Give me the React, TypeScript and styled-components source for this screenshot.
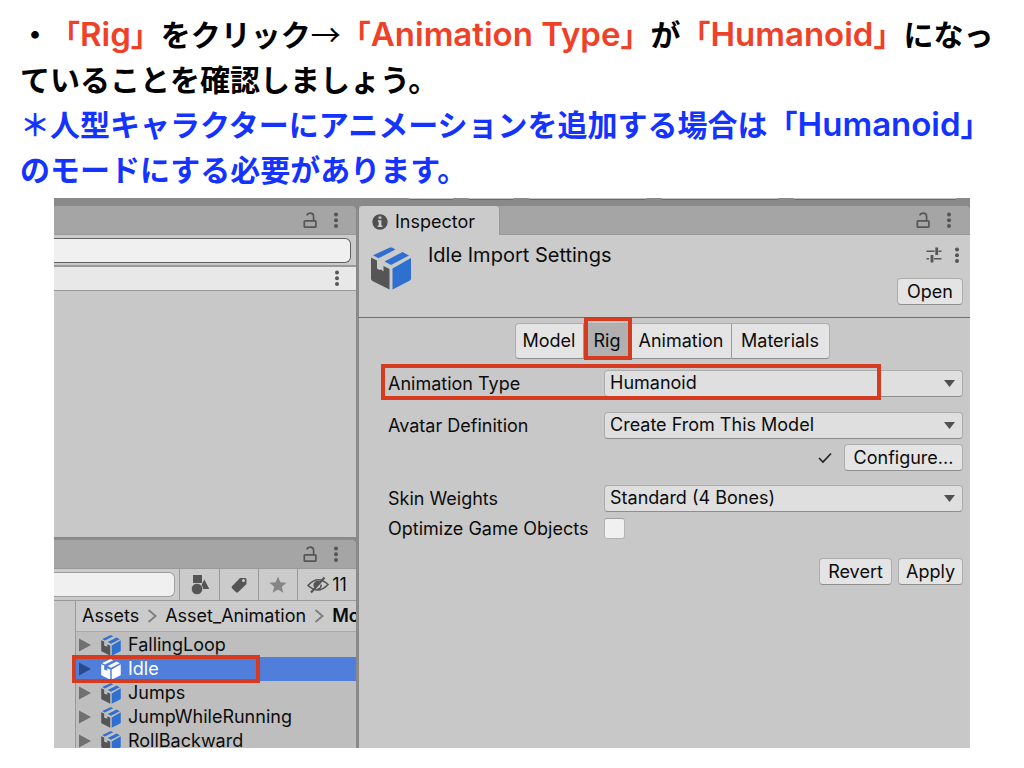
import React from "react";
import styled, { createGlobalStyle, css } from "styled-components";

const GlobalStyle = createGlobalStyle`
  *, *::before, *::after { box-sizing: border-box; }
  body { margin: 0; background: #fff; }
  button, input, select { font: inherit; color: inherit; margin: 0; }
`;

const line = "#999999";
const highlight = "#d63b1f";

const Page = styled.main`
  display: flex;
  flex-direction: column;
  height: 100vh;
  padding: 12px 0 20px;
  font-family: Inter, "Noto Sans CJK JP", sans-serif;
`;

const Notes = styled.div`
  padding: 0 20px;
  margin-bottom: 6px;
  font-family: Inter, "Noto Sans CJK JP", sans-serif;
  font-size: 33px;
  font-weight: 600;
  line-height: 45px;
  white-space: nowrap;
  text-spacing-trim: space-all;
`;

const Note = styled.p<{ $tone?: string }>`
  height: 45px;
  margin: 0;
  color: ${(p) => p.$tone ?? "#000"};
`;

const Key = styled.strong`
  font-weight: inherit;
  color: #ee4128;
`;

const Kana = styled.span<{ $thin?: boolean }>`
  font-family: "Noto Sans CJK JP", sans-serif;
  font-size: 30px;
  font-weight: ${(p) => (p.$thin ? 400 : 700)};
  line-height: 30px;
`;

const Editor = styled.section`
  flex: 1;
  min-height: 0;
  margin: 0 54px;
  display: flex;
  flex-direction: column;
  overflow: hidden;
  background: #8a8a8a;
  color: #0c0c0c;
  font-size: 18px;
  line-height: 24px;
`;

const TopStrip = styled.div`
  display: flex;
  justify-content: flex-end;
  gap: 14px;
  height: 8px;
  padding-right: 13px;
`;

const StripButton = styled.span<{ $w: number }>`
  width: ${(p) => p.$w}px;
  height: 2px;
  background: #c4c4c4;
  border-bottom: 1px solid #6a6a6a;
  border-radius: 0 0 3px 3px;
`;

const Columns = styled.div`
  flex: 1;
  min-height: 0;
  display: grid;
  grid-template-columns: minmax(0, 302fr) minmax(0, 611fr);
  gap: 3px;
`;

const LeftColumn = styled.div`
  display: flex;
  flex-direction: column;
  gap: 3px;
  min-height: 0;
`;

const Panel = styled.section<{ $height?: number }>`
  flex: ${(p) => (p.$height ? `0 0 ${p.$height}px` : "1")};
  min-height: 0;
  display: flex;
  flex-direction: column;
  overflow: hidden;
  background: #c8c8c8;
  border-radius: 0 5px 0 0;
`;

const PanelBar = styled.header<{ $end: number }>`
  flex: none;
  display: flex;
  align-items: center;
  justify-content: flex-end;
  gap: 15px;
  height: 29px;
  padding-right: ${(p) => p.$end}px;
  background: #a5a5a5;
  border-bottom: 1px solid ${line};
`;

const IconButton = styled.button`
  display: flex;
  align-items: center;
  justify-content: center;
  padding: 0;
  border: 0;
  background: none;
  color: #555;
`;

const SearchRow = styled.div`
  flex: none;
  height: 32px;
  padding: 3px 5px 0 0;
  background: #cbcbcb;
  border-bottom: 2px solid ${line};
`;

const SearchInput = styled.input<{ $soft?: boolean }>`
  display: block;
  width: 100%;
  height: 25px;
  padding: 0 8px;
  border: 1px solid ${(p) => (p.$soft ? "#a0a0a0" : "#606060")};
  border-left: 0;
  border-radius: 0 6px 6px 0;
  background: #f0f0f0;
  outline: 0;
`;

const SceneRow = styled.div`
  flex: none;
  display: flex;
  align-items: center;
  justify-content: flex-end;
  height: 24px;
  padding-right: 16px;
  background: #e8e8e8;
  border-bottom: 1px solid ${line};
`;

const ProjectTools = styled.div`
  flex: none;
  display: flex;
  height: 32px;
  background: #cbcbcb;
  border-bottom: 1px solid ${line};
`;

const SearchCell = styled.div`
  flex: 1;
  padding: 3px 4px 0 0;
`;

const Tool = styled(IconButton)<{ $w: number }>`
  flex: none;
  width: ${(p) => p.$w}px;
  gap: 3px;
  border-left: 1px solid ${line};
`;

const Count = styled.span`
  color: #0c0c0c;
`;

const ProjectBody = styled.div`
  flex: 1;
  min-height: 0;
  padding-left: 21px;
`;

const Browser = styled.div`
  height: 100%;
  background: #bebebe;
  border-left: 1px solid ${line};
`;

const Crumbs = styled.nav`
  display: flex;
  align-items: center;
  gap: 8px;
  height: 31px;
  padding-left: 6px;
  margin-bottom: 1px;
  background: #cbcbcb;
  border-bottom: 1px solid #a8a8a8;
  white-space: nowrap;
`;

const Crumb = styled.a<{ $current?: boolean }>`
  color: inherit;
  text-decoration: none;
  font-weight: ${(p) => (p.$current ? 600 : 400)};
`;

const CrumbArrow = styled.svg`
  flex: none;
`;

const AssetList = styled.ul`
  margin: 0;
  padding: 0;
  list-style: none;
`;

const marked = css`
  position: relative;
  &::after {
    content: "";
    position: absolute;
    border: 4px solid ${highlight};
    pointer-events: none;
  }
`;

const Asset = styled.li<{ $selected?: boolean }>`
  display: flex;
  align-items: center;
  height: 24px;
  padding-left: 3px;
  white-space: nowrap;
  ${(p) =>
    p.$selected &&
    css`
      ${marked}
      background: #4f7fdb;
      color: #fff;
      &::after { inset: -2px 96px -2px -4px; }
    `}
`;

const AssetArrow = styled.svg`
  flex: none;
  margin-right: 10px;
`;

const AssetIcon = styled.svg`
  flex: none;
  margin-right: 7px;
`;

const InspectorBar = styled(PanelBar)`
  position: relative;
  border-bottom: 0;
  box-shadow: inset 0 -1px ${line};
`;

const InspectorTab = styled.h2`
  display: flex;
  align-items: center;
  gap: 7px;
  width: 141px;
  height: 100%;
  margin: 0 auto 0 0;
  padding: 3px 0 0 13px;
  background: #cbcbcb;
  border-right: 1px solid ${line};
  border-radius: 4px 4px 0 0;
  font-size: 18px;
  font-weight: 400;
`;

const AssetHeader = styled.div`
  flex: none;
  display: flex;
  height: 83px;
  padding: 8px 7px 0 12px;
  background: #cbcbcb;
  border-bottom: 1px solid #707070;
`;

const AssetTitle = styled.h1`
  flex: 1;
  margin: 0 0 0 17px;
  font-size: 20px;
  font-weight: 400;
`;

const HeaderSide = styled.div`
  display: flex;
  flex-direction: column;
  align-items: flex-end;
  gap: 11px;
`;

const HeaderIcons = styled.div`
  display: flex;
  align-items: center;
  gap: 12px;
  height: 24px;
  padding-right: 3px;
`;

const PushButton = styled.button<{ $w: number }>`
  width: ${(p) => p.$w}px;
  height: 27px;
  padding: 0;
  border: 1px solid #adadad;
  border-bottom-color: #8e8e8e;
  border-radius: 4px;
  background: #e4e4e4;
`;

const Tabs = styled.div`
  display: flex;
  justify-content: center;
  margin: 5px 0 11px;
  padding-left: 15px;
`;

const Tab = styled.button<{ $w: number; $active?: boolean }>`
  width: ${(p) => p.$w}px;
  height: 36px;
  padding: 0;
  border: 1px solid #adadad;
  border-left-color: ${line};
  border-bottom-color: #8e8e8e;
  border-right-width: 0;
  background: ${(p) => (p.$active ? "#b0b0b0" : "#e4e4e4")};
  &:first-child { border-radius: 4px 0 0 4px; border-left-color: #adadad; }
  &:last-child { border-radius: 0 4px 4px 0; border-right-width: 1px; }
  ${(p) =>
    p.$active &&
    css`
      ${marked}
      &::after { inset: -7px -1px -2px 0; }
    `}
`;

const Form = styled.form`
  padding: 0 7px 0 29px;
`;

const Field = styled.div<{ $gap: number; $marked?: boolean }>`
  display: grid;
  grid-template-columns: 216px minmax(0, 1fr);
  align-items: center;
  min-height: 27px;
  margin-bottom: ${(p) => p.$gap}px;
  ${(p) =>
    p.$marked &&
    css`
      ${marked}
      &::after { inset: -6px 82px -3px -7px; }
    `}
`;

const SelectBox = styled.div`
  display: grid;
  align-items: center;
  & > * { grid-area: 1 / 1; }
`;

const Select = styled.select`
  appearance: none;
  width: 100%;
  height: 27px;
  padding: 0 28px 2px 5px;
  border: 1px solid #adadad;
  border-bottom-color: #8e8e8e;
  border-radius: 4px;
  background: #dfdfdf;
`;

const SelectArrow = styled.svg`
  justify-self: end;
  margin-right: 8px;
  pointer-events: none;
`;

const Check = styled.input`
  appearance: none;
  width: 21px;
  height: 21px;
  border: 1px solid #b4b4b4;
  border-top-color: #a0a0a0;
  border-radius: 3px;
  background: #f0f0f0;
`;

const Actions = styled.div<{ $gap: number; $after: number }>`
  display: flex;
  align-items: center;
  justify-content: flex-end;
  gap: ${(p) => p.$gap}px;
  margin-bottom: ${(p) => p.$after}px;
`;

const Lock = () => (
  <svg width="15" height="17" viewBox="0 0 15 17" fill="none" stroke="currentColor" strokeWidth="1.7">
    <rect x="1.3" y="8.8" width="11.6" height="6.4" rx="0.8" />
    <path d="M3.6 3.4C4.3 1.9 5.6 1.2 7 1.2c2.200 0 3.600 1.500 3.600 3.600v4" />
  </svg>
);

const Kebab = () => (
  <svg width="6" height="17" viewBox="0 0 6 17" fill="currentColor">
    <circle cx="3" cy="2.500" r="2" />
    <circle cx="3" cy="8.300" r="2" />
    <circle cx="3" cy="14.100" r="2" />
  </svg>
);

const BoxShapes = ({ white }: { white?: boolean }) => (
  <>
    <path fill={white ? "#fff" : "#555"} d="M0 10.500L6 13.500v8l2.500 1.500 1.500-.500 2.500 2v-5.500L18.500 22V42.500L1.500 34Q0 33 0 31.500Z" />
    <path fill={white ? "#fff" : "#2f6fd0"} d="M21.500 21.500L40 11v20.500q0 1.500-1.500 2.300L21.500 42.500Z" />
    <path fill={white ? "#fff" : "#2f6fd0"} d="M2 8.300L19 .600q1-.400 2 0L24.500 2.600 7.500 11.300Z" />
    <path fill={white ? "#fff" : "#2f6fd0"} d="M13.500 14.500L31.500 5l6.500 3.500-18 9.500Z" />
  </>
);

const Sliders = () => (
  <svg width="16" height="16" viewBox="0 0 16 16" fill="none" stroke="currentColor" strokeWidth="1.500">
    <path d="M0.500 4.200h8M12.500 4.200h3M.500 11.800h2.500M8 11.800h7.500" />
    <path strokeWidth="2.800" d="M10.700.500v7.500M6 8v7.500" />
  </svg>
);

const Shapes = () => (
  <svg width="20" height="20" viewBox="0 0 20 20" fill="currentColor">
    <path d="M3 0h9v8H3zM14.300 4.500l5 9.500h-7L11 11z" />
    <circle cx="7" cy="14" r="5.700" stroke="#cbcbcb" strokeWidth="0.800" />
  </svg>
);

const Tag = () => (
  <svg width="16" height="16" viewBox="0 0 16 16">
    <path fill="currentColor" fillRule="evenodd" d="M9 1h5q1.500 0 1.500 1.500V7L7 15.200q-1 .800-2 0L1 11.200q-.900-1 0-2ZM11 3.500a1.500 1.500 0 1 0 3 0a1.500 1.500 0 1 0-3 0Z" />
  </svg>
);

const Star = () => (
  <svg width="18" height="18" viewBox="0 0 18 18">
    <path fill="#868686" d="M9 .500l2.400 5.700 6.100.500-4.700 4 1.500 6.100L9 13.500l-5.300 3.300 1.500-6.100-4.700-4 6.100-.500z" />
  </svg>
);

const HiddenEye = () => (
  <svg width="22" height="18" viewBox="0 0 22 18" fill="none" stroke="currentColor" strokeWidth="1.600">
    <path d="M1 9.500Q10.500-1.500 21 8.500Q11.500 19 1 9.500Z" />
    <path fill="currentColor" d="M7.500 10.500a3.500 3.500 0 0 1 5.500-4z" />
    <path d="M14 8.500a3.500 3.500 0 0 1-3.500 4.500" />
    <path strokeWidth="2.200" d="M4 16.500L17.500 1.500" />
  </svg>
);

const Chevron = () => (
  <CrumbArrow width="10" height="14" viewBox="0 0 10 14" fill="none" stroke="#808080" strokeWidth="2">
    <path d="M1.500 1L8.500 7l-7 6" />
  </CrumbArrow>
);

const PanelControls = () => (
  <>
    <IconButton aria-label="Lock"><Lock /></IconButton>
    <IconButton aria-label="Panel menu"><Kebab /></IconButton>
  </>
);

const assets = ["FallingLoop", "Idle", "Jumps", "JumpWhileRunning", "RollBackward"];

const Dropdown = ({ id, label, value, gap, mark }: { id: string; label: string; value: string; gap: number; mark?: boolean }) => (
  <Field $gap={gap} $marked={mark}>
    <label htmlFor={id}>{label}</label>
    <SelectBox>
      <Select id={id} defaultValue={value}>
        <option>{value}</option>
      </Select>
      <SelectArrow width="11" height="7" viewBox="0 0 11 7"><path fill="#505050" d="M0 0h11L5.500 7z" /></SelectArrow>
    </SelectBox>
  </Field>
);

export default function App() {
  return (
    <Page>
      <GlobalStyle />
      <Notes lang="ja">
        <Note>
          <Kana>・</Kana><Key><Kana>「</Kana>Rig<Kana>」</Kana></Key><Kana>をクリック</Kana><Kana $thin>→</Kana>
          <Key><Kana>「</Kana>Animation Type<Kana>」</Kana></Key><Kana>が</Kana>
          <Key><Kana>「</Kana>Humanoid<Kana>」</Kana></Key><Kana>になっ</Kana>
        </Note>
        <Note><Kana>ていることを確認しましょう。</Kana></Note>
        <Note $tone="#1433ff">
          <Kana>＊人型キャラクターにアニメーションを追加する場合は「</Kana>Humanoid<Kana>」</Kana>
        </Note>
        <Note $tone="#1433ff"><Kana>のモードにする必要があります。</Kana></Note>
      </Notes>

      <Editor>
        <TopStrip>
          {[46, 46, 119, 118, 164].map((w, i) => <StripButton key={i} $w={w} />)}
        </TopStrip>
        <Columns>
          <LeftColumn>
            <Panel>
              <PanelBar $end={17}><PanelControls /></PanelBar>
              <SearchRow><SearchInput aria-label="Search hierarchy" /></SearchRow>
              <SceneRow><IconButton aria-label="Scene menu"><Kebab /></IconButton></SceneRow>
            </Panel>
            <Panel $height={208}>
              <PanelBar $end={17}><PanelControls /></PanelBar>
              <ProjectTools>
                <SearchCell><SearchInput $soft aria-label="Search project" /></SearchCell>
                <Tool $w={40} aria-label="Search by type"><Shapes /></Tool>
                <Tool $w={39} aria-label="Search by label"><Tag /></Tool>
                <Tool $w={39} aria-label="Favorites"><Star /></Tool>
                <Tool $w={59} aria-label="Hidden packages"><HiddenEye /><Count>11</Count></Tool>
              </ProjectTools>
              <ProjectBody>
                <Browser>
                  <Crumbs aria-label="Folder path">
                    <Crumb href="#assets">Assets</Crumb><Chevron />
                    <Crumb href="#animation">Asset_Animation</Crumb><Chevron />
                    <Crumb href="#motion" $current>Mo</Crumb>
                  </Crumbs>
                  <AssetList>
                    {assets.map((name) => {
                      const selected = name === "Idle";
                      return (
                        <Asset key={name} $selected={selected}>
                          <AssetArrow width="12" height="14" viewBox="0 0 12 14">
                            <path fill={selected ? "#294a8c" : "#707070"} d="M0 0.500v13L12 7z" />
                          </AssetArrow>
                          <AssetIcon width="20" height="21" viewBox="0 0 40 43"><BoxShapes white={selected} /></AssetIcon>
                          {name}
                        </Asset>
                      );
                    })}
                  </AssetList>
                </Browser>
              </ProjectBody>
            </Panel>
          </LeftColumn>

          <Panel>
            <InspectorBar $end={18}>
              <InspectorTab>
                <svg width="16" height="16" viewBox="0 0 16 16">
                  <circle cx="8" cy="8" r="7.700" fill="#505050" />
                  <path fill="#cbcbcb" d="M6.600 2.500h2.800v2.300H6.600zM6 6.200h3.400v5.400h1v1.500H5.700v-1.500h1V7.700H6z" />
                </svg>
                Inspector
              </InspectorTab>
              <PanelControls />
            </InspectorBar>
            <AssetHeader>
              <svg width="40" height="50" viewBox="0 -4 40 50"><BoxShapes /></svg>
              <AssetTitle>Idle Import Settings</AssetTitle>
              <HeaderSide>
                <HeaderIcons>
                  <IconButton aria-label="Presets"><Sliders /></IconButton>
                  <IconButton aria-label="Asset menu"><Kebab /></IconButton>
                </HeaderIcons>
                <PushButton $w={66}>Open</PushButton>
              </HeaderSide>
            </AssetHeader>
            <Tabs role="tablist">
              <Tab role="tab" $w={68}>Model</Tab>
              <Tab role="tab" $w={48} $active aria-selected>Rig</Tab>
              <Tab role="tab" $w={100}>Animation</Tab>
              <Tab role="tab" $w={99}>Materials</Tab>
            </Tabs>
            <Form onSubmit={(e) => e.preventDefault()}>
              <Dropdown id="type" label="Animation Type" value="Humanoid" gap={15} mark />
              <Dropdown id="avatar" label="Avatar Definition" value="Create From This Model" gap={5} />
              <Actions $gap={12} $after={14}>
                <svg width="14" height="12" viewBox="0 0 14 12" fill="none" stroke="#202020" strokeWidth="1.600">
                  <path d="M1 6l4 4L13 1.500" />
                </svg>
                <PushButton type="button" $w={119}>Configure...</PushButton>
              </Actions>
              <Dropdown id="skin" label="Skin Weights" value="Standard (4 Bones)" gap={3} />
              <Field $gap={16}>
                <label htmlFor="optimize">Optimize Game Objects</label>
                <Check type="checkbox" id="optimize" />
              </Field>
              <Actions $gap={6} $after={0}>
                <PushButton type="button" $w={73}>Revert</PushButton>
                <PushButton type="submit" $w={65}>Apply</PushButton>
              </Actions>
            </Form>
          </Panel>
        </Columns>
      </Editor>
    </Page>
  );
}
